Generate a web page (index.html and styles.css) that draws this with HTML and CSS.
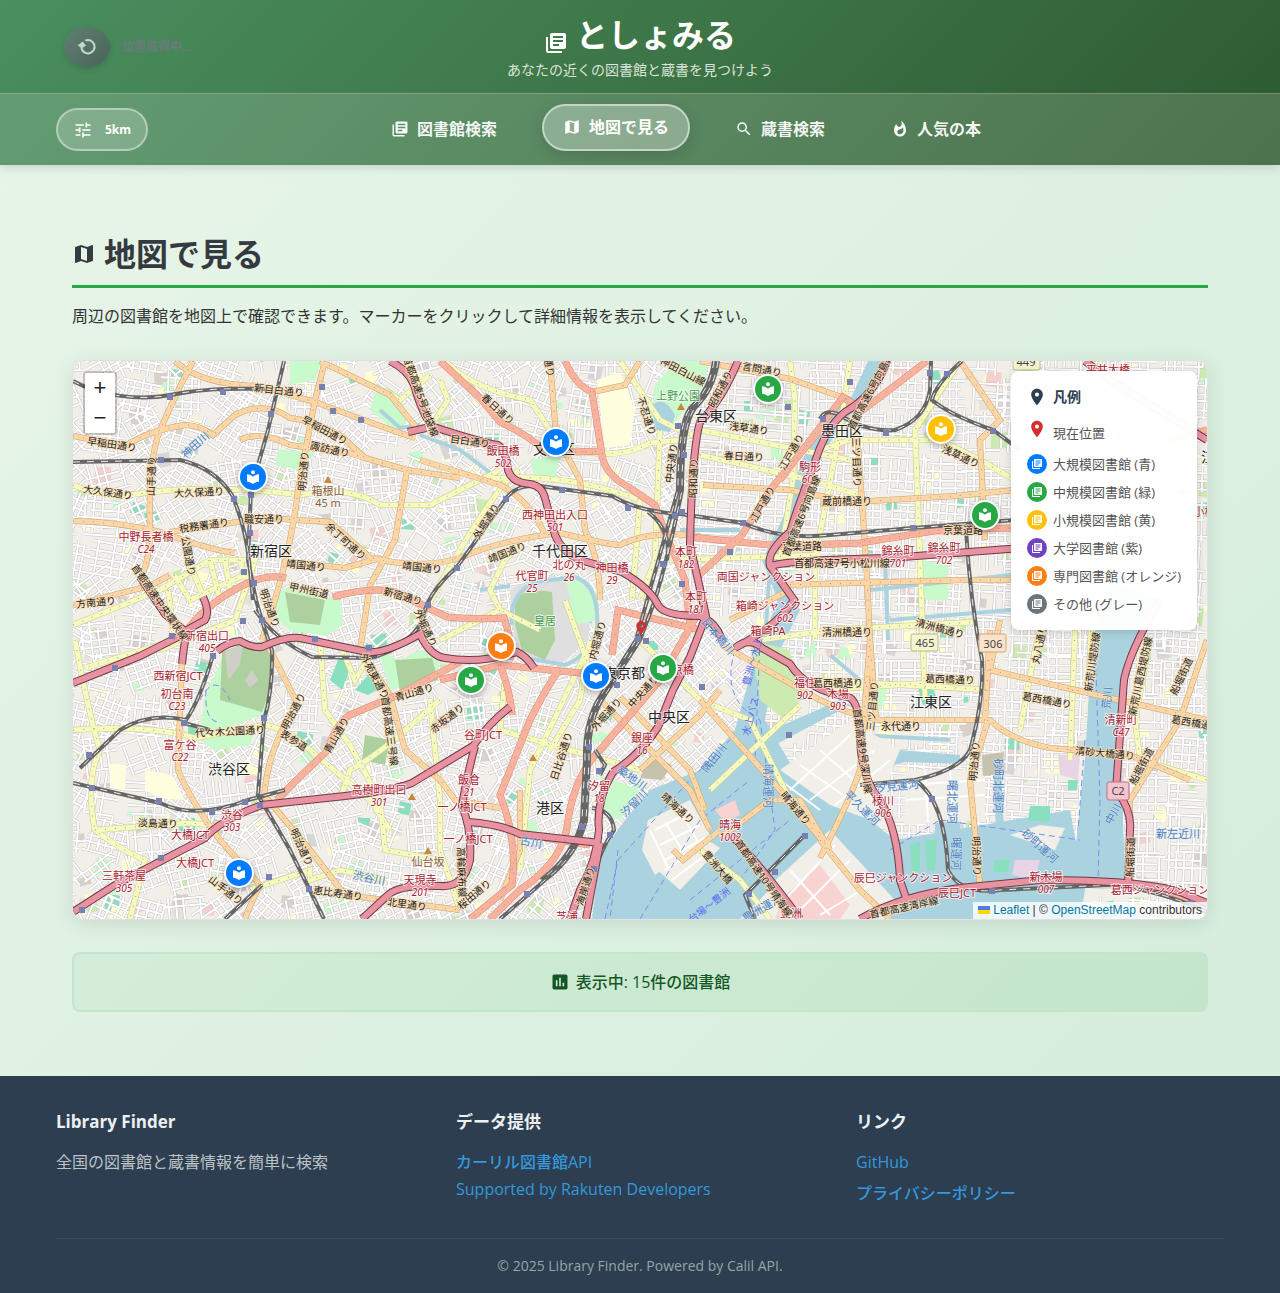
FILE: index.html
```
<!DOCTYPE html>
<html lang="ja">
<head>
<meta charset="utf-8">
<meta name="viewport" content="width=device-width, initial-scale=1">
<title>としょみる</title>
<link rel="stylesheet" href="styles.css">
</head>
<body>
<svg class="sprite" aria-hidden="true">
  <symbol id="i-books" viewBox="0 0 24 24"><path d="M4 6H2v14c0 1.1.9 2 2 2h14v-2H4V6zm16-4H8c-1.1 0-2 .9-2 2v12c0 1.1.9 2 2 2h12c1.1 0 2-.9 2-2V4c0-1.1-.9-2-2-2zm-1 9H9V9h10v2zm-4 4H9v-2h6v2zm4-8H9V5h10v2z"/></symbol>
  <symbol id="i-map" viewBox="0 0 24 24"><path d="M20.5 3l-.16.03L15 5.1 9 3 3.36 4.9c-.21.07-.36.25-.36.48V20.5c0 .28.22.5.5.5l.16-.03L9 18.9l6 2.1 5.64-1.9c.21-.07.36-.25.36-.48V3.5c0-.28-.22-.5-.5-.5zM15 19l-6-2.11V5l6 2.11V19z"/></symbol>
  <symbol id="i-search" viewBox="0 0 24 24"><path d="M15.5 14h-.79l-.28-.27A6.471 6.471 0 0 0 16 9.5 6.5 6.5 0 1 0 9.5 16c1.61 0 3.09-.59 4.23-1.57l.27.28v.79l5 4.99L20.49 19l-4.99-5zm-6 0C7.01 14 5 11.99 5 9.5S7.01 5 9.5 5 14 7.01 14 9.5 11.99 14 9.5 14z"/></symbol>
  <symbol id="i-fire" viewBox="0 0 24 24"><path d="M13.5.67s.74 2.65.74 4.8c0 2.06-1.35 3.73-3.41 3.73-2.07 0-3.63-1.67-3.63-3.73l.03-.36C5.21 7.51 4 10.62 4 14c0 4.42 3.58 8 8 8s8-3.58 8-8C20 8.61 17.41 3.8 13.5.67zM11.71 19c-1.78 0-3.22-1.4-3.22-3.14 0-1.62 1.05-2.76 2.81-3.12 1.77-.36 3.6-1.21 4.62-2.58.39 1.29.59 2.65.59 4.04 0 2.65-2.15 4.8-4.8 4.8z"/></symbol>
  <symbol id="i-tune" viewBox="0 0 24 24"><path d="M3 17v2h6v-2H3zM3 5v2h10V5H3zm10 16v-2h8v-2h-8v-2h-2v6h2zM7 9v2H3v2h4v2h2V9H7zm14 4v-2H11v2h10zm-6-4h2V7h4V5h-4V3h-2v6z"/></symbol>
  <symbol id="i-chart" viewBox="0 0 24 24"><path d="M19 3H5c-1.1 0-2 .9-2 2v14c0 1.1.9 2 2 2h14c1.1 0 2-.9 2-2V5c0-1.1-.9-2-2-2zM9 17H7v-7h2v7zm4 0h-2V7h2v10zm4 0h-2v-4h2v4z"/></symbol>
  <symbol id="i-place" viewBox="0 0 24 24"><path d="M12 2C8.13 2 5 5.13 5 9c0 5.25 7 13 7 13s7-7.75 7-13c0-3.87-3.13-7-7-7zm0 9.5c-1.38 0-2.5-1.12-2.5-2.5s1.12-2.5 2.5-2.5 2.5 1.12 2.5 2.5-1.12 2.5-2.5 2.5z"/></symbol>
  <symbol id="i-reader" viewBox="0 0 24 24"><path d="M12 11.55C9.64 9.35 6.48 8 3 8v11c3.48 0 6.64 1.35 9 3.55 2.36-2.19 5.52-3.55 9-3.55V8c-3.48 0-6.64 1.35-9 3.55zM12 8c1.66 0 3-1.34 3-3s-1.34-3-3-3-3 1.34-3 3 1.34 3 3 3z"/></symbol>
  <symbol id="i-refresh" viewBox="0 0 24 24"><path d="M10 4.3A8 8 0 1 1 5.200 12.500" fill="none" stroke="currentColor" stroke-width="2.400"/><path d="M.8 10.200 6.800 5.500 10.800 10.300 6 13.500z"/></symbol>
</svg>

<header class="header">
  <div class="header-top">
    <div class="locate">
      <button class="locate-btn" type="button" aria-label="現在位置を更新" disabled><svg class="icon"><use href="#i-refresh"/></svg></button>
      <span class="locate-status">位置取得中...</span>
    </div>
    <div class="brand">
      <h1 class="brand-title"><svg class="icon"><use href="#i-books"/></svg>としょみる</h1>
      <p class="brand-sub">あなたの近くの図書館と蔵書を見つけよう</p>
    </div>
  </div>
  <nav class="nav">
    <button class="range-btn" type="button"><svg class="icon"><use href="#i-tune"/></svg>5km</button>
    <div class="tabs">
      <button class="tab" type="button"><svg class="icon"><use href="#i-books"/></svg>図書館検索</button>
      <button class="tab tab-active" type="button"><svg class="icon"><use href="#i-map"/></svg>地図で見る</button>
      <button class="tab" type="button"><svg class="icon"><use href="#i-search"/></svg>蔵書検索</button>
      <button class="tab" type="button"><svg class="icon"><use href="#i-fire"/></svg>人気の本</button>
    </div>
  </nav>
</header>

<main class="main">
  <h2 class="page-title"><svg class="icon"><use href="#i-map"/></svg>地図で見る</h2>
  <p class="lead">周辺の図書館を地図上で確認できます。マーカーをクリックして詳細情報を表示してください。</p>

  <div class="map">
    <svg class="tiles" viewBox="73 361 1134 558" preserveAspectRatio="xMidYMid slice" aria-label="東京都心の地図">
      <defs>
        <g id="motorway">
          <path d="M390 361Q408 370 414 385Q424 420 434 427Q480 442 498 445Q506 450 508 470Q512 483 530 484Q542 486 545 498L555 535Q562 552 580 560L622 572Q650 588 658 605Q664 616 700 616Q716 622 722 640"/>
          <path d="M73 683L140 656L186 633M217 651Q228 642 240 641Q252 648 262 647Q285 636 300 638L367 652Q385 654 420 634Q430 656 445 658Q480 664 517 652Q526 656 534 668"/>
          <path d="M140 577L165 614L187 633M203 597Q210 612 205 620L187 630Q184 645 182 664M408 432L426 428"/>
          <path d="M73 912L115 885L205 838Q220 820 262 805L345 796Q395 790 412 783L473 746Q490 722 510 707M475 746Q466 780 462 806Q472 830 470 860Q464 888 440 886Q400 884 388 895L362 919"/>
          <path d="M468 822Q500 824 520 834L600 843M613 772Q596 800 599 830Q597 860 580 890L570 919M600 843L586 919"/>
          <path d="M738 361Q722 400 700 422Q692 450 690 545L698 580L706 616L690 657L673 690L658 727Q640 755 613 772"/>
          <path d="M887 361Q875 395 845 412Q825 428 814 465Q800 500 790 532Q766 552 770 566L794 600Q780 624 735 648Q750 636 762 648L790 664Q806 690 848 697Q860 700 860 740Q862 780 880 800Q898 830 900 880L906 898"/>
          <path d="M770 566Q790 560 890 558L1060 545M860 919Q900 896 960 888L1040 880Q1140 880 1180 892L1207 903"/>
          <path d="M1085 361L1110 380L1207 440M1160 600Q1130 650 1124 680L1116 790Q1132 810 1130 830L1128 885M732 836Q760 865 800 919"/>
        </g>
        <g id="trunk">
          <path d="M187 630Q210 600 250 582Q270 574 286 578M333 597Q370 586 395 592L447 617Q480 620 504 618Q512 640 510 660M277 800Q300 776 326 752Q338 720 352 714L400 694L460 662"/>
          <path d="M440 361L480 398L500 422Q530 436 546 452L575 452L603 451M565 361Q575 385 592 392L602 455Q605 475 630 488L655 505L664 530L685 580L690 625M560 668Q545 690 530 720L500 795Q518 840 512 885L470 919"/>
          <path d="M700 610L660 680L600 750Q575 775 568 820Q565 860 520 890L490 919M820 430L770 490L742 535L697 577M927 361L863 410L843 397L780 480M690 537L780 546L860 543L940 530L1011 528M440 680L500 665Q510 690 512 715"/>
          <path d="M1170 440L1207 430M612 655L618 610L700 630M500 665L600 675M1130 882L1207 908M545 838L590 845"/>
        </g>
        <g id="primary">
          <path d="M193 361Q180 385 160 430Q148 460 150 530Q150 560 140 580M175 361Q200 385 260 386L315 402Q390 430 415 438M73 436L125 446Q150 430 185 425Q200 425 213 435L235 415Q265 400 290 418Q310 420 340 435L365 458L407 470L460 478M240 440Q260 430 290 445L345 452L365 458M325 361L315 400L298 490Q290 560 262 640"/>
          <path d="M73 521Q120 522 160 532Q210 550 235 553M170 532L265 518L330 522L373 560L345 568L290 562M407 470L395 540L370 585L360 650M373 558Q420 570 460 558Q500 540 560 533Q610 545 620 545Q650 530 700 536M182 660L178 770Q190 800 220 840L260 885Q250 905 245 919M265 640L298 705Q270 740 264 795L310 850L345 895L460 910"/>
          <path d="M73 605L150 586L170 575M320 361L390 395Q410 420 420 432M550 361L556 435L580 480L585 530Q600 560 600 600M360 650L390 695L405 750L440 780L455 800L500 808M420 460L500 485Q530 500 545 535M703 485L790 490L840 500"/>
          <path d="M820 504L955 496L1015 490M857 430L866 560L870 640L876 720M780 585L965 580L1011 580M985 540L980 440L1000 420L960 361M790 590L730 620M700 361L790 379L850 400M640 361L625 385L592 392M620 697L690 770L705 810M673 850L683 860L720 830"/>
          <path d="M600 700L690 790L710 830M640 770L700 715L720 690M720 838L770 800L800 800L830 850M722 645L820 700Q850 715 880 720L990 720Q1010 740 1050 748L1130 755L1190 780M988 720L970 780L980 885M990 670L1075 690L1207 720M990 670L1000 620"/>
          <path d="M1207 640L1180 720L1130 800L1130 880M990 630L985 720M820 858Q850 800 860 770L870 640M820 840L860 890L890 919M700 700L780 790L830 850M520 790L520 850L500 900"/>
        </g>
        <g id="secondary">
          <path d="M73 485Q110 500 150 492Q220 485 300 495Q350 485 380 505L430 505L500 470M168 590L175 640L85 668M73 625L160 590L210 560L255 560L235 620L160 650M210 560L220 600M190 565L205 600M225 560L230 590M240 560L246 580M174 575L190 600L255 570"/>
          <path d="M75 640Q90 720 100 750Q85 780 95 830Q120 850 145 860L130 919M73 730Q150 725 195 738L265 725Q290 730 310 750L370 800L390 830M95 830L190 823L210 825M320 640L325 710L350 745L380 800L385 850L440 860M340 645L355 680L370 655M440 700L400 735Q370 760 350 770L340 800"/>
          <path d="M430 375L400 400L385 390M410 361L425 420M440 380L448 400L435 420M445 361L455 370Q480 390 530 400L550 430L575 450Q620 460 650 443L680 440L700 430M480 480Q560 470 640 500L632 600M520 470Q500 480 445 575L420 620M660 430L655 560L640 600M670 560L820 555"/>
          <path d="M620 361L660 420L680 430M790 361L795 400L793 480L780 560M700 455L810 480L860 495M820 450L850 440L940 440L980 460L1015 480M850 361L840 430L815 560L815 640M960 361L915 430L920 560L925 700M700 430L850 460M760 640L830 630L975 622M820 690L975 680M815 680L990 690M1060 560L1035 650L1020 730M1075 630L1070 760"/>
          <path d="M505 680L500 730L570 750L640 770M540 630L500 610L490 590L505 560L520 545M565 600L585 655L530 770L520 870M590 640L580 700L550 750M640 640L700 700L750 720L780 780L790 800M710 790L800 705M700 850L740 880L770 919M1150 640L1135 720L1140 760L1207 780M1095 361L1090 680M500 610L440 640M250 890L310 870L310 880L340 870L385 880M460 910L440 850L440 800L430 700"/>
        </g>
        <g id="rail">
          <path d="M73 381C100 396 140 401 170 395S225 388 265 389M73 462L180 460Q215 468 232 495Q245 525 249 560L253 600M284 361L268 430L251 490L248 560L256 600Q265 632 272 650Q273 690 264 720L258 795L290 850L324 919"/>
          <path d="M255 610Q275 640 312 657L370 658Q405 650 423 620Q425 595 457 567L505 500Q515 484 540 486L612 496Q640 512 680 514L743 523Q780 540 830 535L913 528L1015 520"/>
          <path d="M718 361Q714 390 695 408Q682 425 682 490Q670 550 655 600L640 640L605 695Q588 720 589 760L586 820Q578 855 545 880L500 919M714 361Q710 390 690 408Q678 425 678 490L636 640L601 695Q584 720 585 760L582 820Q574 855 541 880M648 512Q672 530 667 560"/>
          <path d="M213 655Q200 700 186 720Q150 712 120 730L80 768M184 723L210 730M73 783L160 803Q195 820 248 800L285 790M262 885L225 919M820 419Q825 408 840 415Q865 432 895 430Q925 420 930 390L931 361M962 361Q935 385 932 400Q950 415 993 430L1020 450"/>
          <path d="M860 785L915 780Q960 770 970 750Q984 700 982 660Q970 600 966 530M915 780Q945 800 948 870Q960 895 1000 890L1110 885Q1160 890 1207 912M595 750L605 765L600 775M592 808Q612 810 614 830Q600 850 592 880M805 835L745 895L755 919"/>
        </g>
        <g id="lane"></g>
      </defs>
      <rect class="land" x="73" y="361" width="1134" height="558"/>
      <g id="blocks"></g>
      <use href="#lane" class="lane-case"/><use href="#lane" class="lane-fill"/>
      <g class="park">
        <path d="M278 592L292 586L340 600L343 625L325 636L290 630L272 616z"/><path d="M205 695L222 660L272 640L270 712L210 735L200 730z"/><path d="M378 650L400 660L420 650L440 655L438 680L390 690z"/>
        <path d="M655 385L675 361L708 361L705 385L685 410L668 430L650 420z"/><path d="M530 460L560 455L555 480L535 480z"/><path d="M920 560L948 565L948 600L925 600z"/>
        <path d="M600 775L640 790L620 820L605 815z"/><path d="M278 450L315 452L300 470L275 465zM290 361L322 361L315 380L290 385z"/><path d="M378 385L400 395L408 420L395 430L370 410z"/>
        <path d="M520 825L535 820L540 835L520 835z"/><path d="M905 843L945 830L1020 850L1015 880L925 882L910 870z"/><path d="M868 685L888 685L882 708L874 706z"/><path d="M200 740L255 730L250 745L215 750z"/>
      </g>
      <g class="wood">
        <path d="M222 652L240 645L270 640L272 685L262 712L220 700z"/><path d="M285 592L325 600L320 625L290 622z"/><path d="M395 660L432 658L438 680L400 692z"/><path d="M365 735L390 740L385 765L362 760z"/>
      </g>
      <path class="bare" d="M225 650L243 645L240 665L228 680zM245 680L252 670L258 680L250 688z"/>
      <path class="palace" d="M510 590Q540 570 575 580Q595 600 588 640L560 665L520 655L512 625z"/>
      <path class="wood" d="M515 598Q530 588 552 592L555 640L545 660L522 650L515 625z"/>
      <path class="park" d="M565 575Q605 580 598 620L575 625z"/>
      <path class="school" d="M597 380L620 372L635 410L630 445L605 448z"/>
      <g class="water">
        <path d="M592 919L600 855L625 820L650 790L700 770L735 730L760 640L780 640L765 720L800 780L870 820L895 840L1070 810L1085 890L1080 919H890L800 860L740 919z"/>
        <path d="M868 361L888 361Q870 400 840 425L815 470L795 540L775 570L800 610L765 680L745 700L758 650L778 600L762 560L782 520L802 460L828 412L850 400z"/>
        <path d="M1110 580L1160 600L1125 660L1122 780L1125 880L1072 880L1085 760L1092 640z"/>
        <path d="M652 405Q665 395 675 415L670 432L655 430z"/>
        <path d="M740 725L760 740L830 810L825 822L735 745zM760 735L840 700L850 705L775 745zM790 700L760 640L775 640L805 700zM870 760L900 750L960 755L960 764L905 762L870 772zM950 780L962 780L960 850L935 850L935 780zM1000 760L1004 830L996 830L993 760z"/>
      </g>
      <path class="moat" d="M512 625Q508 595 535 582L575 577Q600 585 597 630Q590 655 565 665L520 657L512 640M480 590L510 586M420 435L460 450L500 480M770 568L765 640M380 410L400 428L420 425M680 530L740 530M890 620L1011 610M870 590L1011 575M885 560L888 640M830 655L860 680M860 735L950 740"/>
      <g class="isle">
        <path d="M648 820L690 800L710 835L655 875L642 850z"/><path d="M655 868L700 835L720 848L680 890z"/><path d="M770 885L830 830L895 900L890 919L760 919z"/><path d="M780 770L850 720L900 750L870 820L830 805z"/><path d="M750 640L790 650L800 700L785 720L760 700z" class="green"/><path d="M905 770L985 770L985 820L905 825z"/><path d="M1010 835L1040 825L1065 828L1055 850z"/>
        <path class="pink" d="M785 895L820 865L850 905L840 919H775zM715 810L735 800L740 815L725 822z"/><path class="mall" d="M1058 755L1080 755L1078 780L1060 775zM1015 860L1040 860L1035 880L1012 875z"/>
        <path class="pitch" d="M1030 806L1050 806L1050 822L1028 820zM1068 780L1078 780L1077 790L1068 790zM910 845L920 842L920 870L912 872zM995 860L1010 860L1008 872L993 872zM925 840L937 840L935 870L927 870z"/>
        <path class="works" d="M650 755L672 765L662 780L640 778zM982 755L1004 752L1000 774L983 776z"/><path class="pitch" d="M340 655L350 668L342 690L330 680zM368 675L380 688L368 695L355 690z"/><path class="school" d="M145 770L172 775L185 800L160 798L145 790zM110 764L126 765L125 790L110 788z"/>
      </g>
      <g class="islelanes"><path d="M655 830L690 812M660 845L700 825M665 860L705 838M650 830L668 868M665 822L685 855M680 812L698 842M780 780L820 810M800 765L850 800M820 750L865 790M790 790L850 735M810 800L875 750M835 805L890 760M780 905L835 845M800 910L850 860M820 915L870 885M790 870L830 915M905 785L985 780M905 800L985 795M925 770L928 822M950 770L953 822M665 870L705 845M672 880L712 850"/></g>
      <path class="ferry" d="M735 650Q720 700 760 720L775 830L740 880M760 640L755 760M605 919L618 860L690 780L730 740M640 919L700 820L750 780M618 850L610 919M1095 640L1100 800L1098 880M940 820L1080 840M890 850L940 820M690 900L790 820M1085 740L1078 830M200 700Q215 670 230 700M206 690Q204 720 218 722"/>
      <use href="#secondary" class="secondary-case"/><use href="#secondary" class="secondary-fill"/>
      <use href="#primary" class="primary-case"/><use href="#primary" class="primary-fill"/>
      <use href="#trunk" class="trunk-case"/><use href="#trunk" class="trunk-fill"/>
      <use href="#rail" class="rail-case"/><use href="#rail" class="rail-fill"/>
      <use href="#motorway" class="motorway-case"/><use href="#motorway" class="motorway-fill"/>
      <use href="#trunk" class="stops"/><use href="#primary" class="stops"/><use href="#secondary" class="stops"/>
      <g id="stations" class="stations"></g>
      <g class="shields"><rect x="1013" y="353" width="27" height="17" rx="2"/><rect x="911" y="634" width="27" height="17" rx="2"/><rect class="shield-306" x="979" y="634" width="27" height="18" rx="2"/><rect class="shield-c2" x="1107" y="782" width="22" height="18" rx="2"/></g>
      <g id="labels"></g>
    </svg>

    <div id="markers"></div>
    <button class="pin" type="button" aria-label="現在位置"><svg class="icon"><use href="#i-place"/></svg></button>

    <div class="zoom">
      <button class="zoom-btn" type="button" aria-label="拡大">+</button>
      <button class="zoom-btn" type="button" aria-label="縮小">−</button>
    </div>

    <aside class="legend">
      <h3 class="legend-title"><svg class="icon"><use href="#i-place"/></svg>凡例</h3>
      <ul class="legend-list">
        <li class="legend-item here"><svg class="icon"><use href="#i-place"/></svg>現在位置</li>
        <li class="legend-item"><span class="dot blue"><svg class="icon"><use href="#i-books"/></svg></span>大規模図書館 (青)</li>
        <li class="legend-item"><span class="dot green"><svg class="icon"><use href="#i-books"/></svg></span>中規模図書館 (緑)</li>
        <li class="legend-item"><span class="dot yellow"><svg class="icon"><use href="#i-books"/></svg></span>小規模図書館 (黄)</li>
        <li class="legend-item"><span class="dot purple"><svg class="icon"><use href="#i-books"/></svg></span>大学図書館 (紫)</li>
        <li class="legend-item"><span class="dot orange"><svg class="icon"><use href="#i-books"/></svg></span>専門図書館 (オレンジ)</li>
        <li class="legend-item"><span class="dot gray"><svg class="icon"><use href="#i-books"/></svg></span>その他 (グレー)</li>
      </ul>
    </aside>

    <div class="credit"><a href="#leaflet"><svg class="flag" viewBox="0 0 12 8"><path fill="#4c7be1" d="M0 0h12v4H0z"/><path fill="#ffd500" d="M0 4h12v4H0z"/></svg> Leaflet</a> | © <a href="#osm">OpenStreetMap</a> contributors</div>
  </div>

  <div class="stats"><svg class="icon"><use href="#i-chart"/></svg>表示中: 15件の図書館</div>
</main>

<footer class="footer">
  <div class="footer-cols">
    <section>
      <h4 class="footer-title">Library Finder</h4>
      <p class="footer-text">全国の図書館と蔵書情報を簡単に検索</p>
    </section>
    <section>
      <h4 class="footer-title">データ提供</h4>
      <p class="footer-text"><a href="#calil">カーリル図書館API</a></p>
      <p class="footer-text"><a href="#rakuten">Supported by Rakuten Developers</a></p>
    </section>
    <section>
      <h4 class="footer-title">リンク</h4>
      <ul class="footer-links">
        <li><a href="#github">GitHub</a></li>
        <li><a href="#privacy">プライバシーポリシー</a></li>
      </ul>
    </section>
  </div>
  <p class="copyright">© 2025 Library Finder. Powered by Calil API.</p>
</footer>
<script src="map.js"></script>
</body>
</html>
```
FILE: styles.css
```
* { box-sizing: border-box; margin: 0; padding: 0; }
body {
  font-family: "Open Sans", "Noto Sans CJK JP", sans-serif;
  font-size: 16px;
  line-height: 24px;
  color: #333;
  background: linear-gradient(135deg, #e8f5e8 0%, #d4edda 100%);
}
button { font: inherit; color: inherit; border: 0; background: none; cursor: pointer; }
ul { list-style: none; }
.sprite { display: none; }
.icon { width: 16px; height: 16px; fill: currentColor; flex: none; display: block; }

/* header */
.header {
  position: relative;
  color: #fff;
  background: linear-gradient(135deg, #4a8f5f 0%, #3d7546 50%, #2d5a2f 100%);
  box-shadow: 0 2px 10px rgba(0, 0, 0, .15);
}
.header-top {
  display: grid;
  grid-template-columns: 1fr auto 1fr;
  align-items: center;
  padding: 12px 64px;
}
.locate { display: flex; align-items: center; gap: 12px; }
.locate-btn {
  display: flex; align-items: center; justify-content: center;
  width: 46px; height: 40px; border-radius: 50%;
  color: #c3d8cb;
  background: linear-gradient(135deg, #5f8170, #4a625b);
  box-shadow: 0 2px 6px rgba(0, 0, 0, .15);
}
.locate-btn .icon { width: 20px; height: 20px; }
.locate-status { font-size: 12px; font-weight: 600; color: #6b7a7c; }
.brand { text-align: center; }
.brand-title {
  display: flex; align-items: center; justify-content: center; gap: 8px;
  font-size: 32px; line-height: 46px; font-weight: 700;
}
.brand-title .icon { width: 24px; height: 24px; margin-top: 16px; }
.brand-sub { font-size: 14px; line-height: 23px; color: rgba(255, 255, 255, .82); }
.nav {
  display: flex; align-items: center;
  padding: 12px 56px;
  background: rgba(255, 255, 255, .15);
  border-top: 1px solid rgba(255, 255, 255, .2);
}
.range-btn {
  display: flex; align-items: center; gap: 12px;
  height: 43px; padding: 0 15px; border-radius: 22px;
  border: 2px solid rgba(255, 255, 255, .4);
  background: rgba(255, 255, 255, .2);
  font-size: 12px; font-weight: 700;
}
.range-btn .icon { width: 20px; height: 20px; }
.tabs { flex: 1; display: flex; justify-content: center; gap: 24px; }
.tab {
  display: flex; align-items: center; gap: 8px;
  height: 47px; padding: 0 19px 2px; border-radius: 25px;
  border: 2px solid transparent;
  font-weight: 600; color: rgba(255, 255, 255, .95);
}
.tab .icon { width: 18px; height: 18px; }
.tab-active {
  transform: translateY(-2px);
  background: rgba(255, 255, 255, .3);
  border-color: rgba(255, 255, 255, .5);
  box-shadow: 0 4px 15px rgba(0, 0, 0, .15);
  font-weight: 700; color: #fff;
}

/* main */
.main { max-width: 1200px; margin: 0 auto; padding: 66px 32px 64px; }
.page-title {
  display: flex; align-items: center; gap: 8px;
  padding-bottom: 8px; border-bottom: 3px solid #28a745;
  font-size: 32px; line-height: 46px; font-weight: 600; color: #343a40;
}
.page-title .icon { width: 24px; height: 24px; }
.lead { margin: 16px 0 32px; }
.map {
  position: relative; height: 560px; overflow: hidden;
  border: 1px solid #dee2e6; border-radius: 12px;
  box-shadow: 0 4px 20px rgba(0, 0, 0, .1);
}
.tiles { display: block; width: 100%; height: 100%; }
.stats {
  display: flex; align-items: center; justify-content: center; gap: 6px;
  height: 60px; margin-top: 32px; border-radius: 8px;
  border: 2px solid #c3e6cb;
  background: linear-gradient(135deg, #d4edda, #c3e6cb);
  color: #155724; font-weight: 500;
}
.stats .icon { width: 20px; height: 20px; }

/* map drawing */
.tiles path, .tiles use { fill: none; }
.tiles .land { fill: #f2efe9; }
.tiles .park path, .tiles path.park { fill: #c8facc; }
.tiles .wood path, .tiles path.wood { fill: #add19e; }
.tiles .bare { fill: #cfcfc8; }
.tiles .palace { fill: #e0dfdf; }
.tiles path.school { fill: #ffffe0; }
.tiles .water path { fill: #aad3df; }
.tiles .isle path { fill: #f2efe9; }
.tiles .isle .green { fill: #cdebb0; }
.tiles .isle .pink { fill: #f9d2d2; }
.tiles .isle .mall { fill: #e8d4e4; }
.tiles .isle .pitch { fill: #88e0be; }
.tiles .isle .works { fill: #c5c3ae; }
.tiles .isle .school { fill: #ffffe0; }
.islelanes { stroke: #fff; stroke-width: 2; }
.moat { stroke: #aad3df; stroke-width: 4; }
.ferry { stroke: #7a8df0; stroke-width: 1; stroke-dasharray: 6 4; }
.lane-case { stroke: #c4bfc4; stroke-width: 3; }
.lane-fill { stroke: #fff; stroke-width: 2; }
.secondary-case { stroke: #c9cc8a; stroke-width: 6; }
.secondary-fill { stroke: #f7fabf; stroke-width: 5; }
.primary-case { stroke: #c9a36c; stroke-width: 6; }
.primary-fill { stroke: #fcd6a4; stroke-width: 5; }
.trunk-case { stroke: #d98871; stroke-width: 7; }
.trunk-fill { stroke: #f9b29c; stroke-width: 6; }
.rail-case { stroke: #666; stroke-width: 4; }
.rail-fill { stroke: #eee; stroke-width: 1; stroke-dasharray: 7 7; }
.motorway-case { stroke: #6d3a45; stroke-width: 8; }
.motorway-fill { stroke: #e892a2; stroke-width: 6; }
.stops { stroke: #9a8fb5; stroke-width: 1; stroke-dasharray: 1 9; }
.stations { fill: #7981b0; }
.shields rect { fill: #f4f5d0; stroke: #b9bb80; }
.shields .shield-306 { fill: #fae3cc; stroke: #cfa878; }
.shields .shield-c2 { fill: #f3c6cf; stroke: #c96d80; }
.tiles text {
  font-family: "Noto Sans", "Noto Sans CJK JP", sans-serif;
  text-anchor: middle; paint-order: stroke; stroke-linejoin: round;
}
.t-ward { font-size: 14px; fill: #222; stroke: rgba(255, 255, 255, .6); stroke-width: 2px; }
.t-road { font-size: 10px; fill: #222; stroke: rgba(252, 225, 185, .8); stroke-width: 2px; }
.t-exit { font-size: 11px; fill: #a8202e; stroke: rgba(255, 255, 255, .75); stroke-width: 2px; }
.t-num { font-size: 10px; font-style: italic; fill: #a8202e; stroke: rgba(255, 255, 255, .75); stroke-width: 2px; }
.t-water { font-size: 11px; fill: #4f80c0; stroke: rgba(220, 238, 245, .6); stroke-width: 1px; }
.t-ferry { font-size: 10px; fill: #5c6cf0; }
.t-hill { font-size: 11px; fill: #8a5a3c; stroke: rgba(255, 255, 255, .7); stroke-width: 2px; }
.t-park { font-size: 11px; fill: #4a9a50; stroke: rgba(255, 255, 255, .7); stroke-width: 2px; }
.t-shield { font-size: 11px; fill: #444; }

/* map overlays */
.marker {
  position: absolute; width: 30px; height: 30px; margin: -15px 0 0 -15px;
  display: flex; align-items: center; justify-content: center;
  border: 2px solid #fff; border-radius: 50%; color: #fff;
  box-shadow: 0 2px 6px rgba(0, 0, 0, .3);
}
.pin { position: absolute; left: calc(50% + 1px); top: 267px; margin: -8px 0 0 -8px; color: #d32f2f; }
.blue { background: #007bff; }
.green { background: #28a745; }
.yellow { background: #ffc107; }
.purple { background: #6f42c1; }
.orange { background: #fd7e14; }
.gray { background: #6c757d; }
.zoom {
  position: absolute; left: 10px; top: 10px;
  border: 2px solid rgba(0, 0, 0, .2); border-radius: 4px; background-clip: padding-box;
}
.zoom-btn {
  display: block; width: 30px; height: 30px; background: #fff;
  font: 22px/30px "Liberation Sans", Arial, sans-serif; color: #222;
}
.zoom-btn:first-child { border-radius: 2px 2px 0 0; }
.zoom-btn:last-child { border-radius: 0 0 2px 2px; }
.legend {
  position: absolute; right: 10px; top: 10px;
  padding: 16px; border-radius: 8px;
  background: rgba(255, 255, 255, .97);
  box-shadow: 0 2px 10px rgba(0, 0, 0, .15);
}
.legend-title {
  display: flex; align-items: center; gap: 6px;
  margin-bottom: 12px; font-size: 14px; line-height: 20px; font-weight: 600; color: #2c3e50;
}
.legend-title .icon { width: 20px; height: 20px; }
.legend-list { display: flex; flex-direction: column; gap: 8px; }
.legend-item {
  display: flex; align-items: center; gap: 6px;
  font-size: 13px; line-height: 20px; color: #555;
}
.here { height: 27px; }
.here .icon { width: 20px; height: 24px; color: #d32f2f; margin-top: -8px; }
.dot { display: flex; align-items: center; justify-content: center; width: 20px; height: 20px; border-radius: 50%; color: #fff; }
.dot .icon { width: 12px; height: 12px; }
.credit {
  position: absolute; right: 0; bottom: 0; padding: 0 5px;
  background: rgba(255, 255, 255, .8);
  font: 12px/17px "Liberation Sans", Arial, sans-serif; color: #333;
}
.credit a { color: #0078a8; text-decoration: none; }
.flag { width: 12px; height: 8px; }

/* footer */
.footer { padding: 32px 56px 0; background: #2c3e50; color: #bdc3c7; }
.footer-cols, .copyright { max-width: 1168px; margin: 0 auto; }
.footer-cols { display: grid; grid-template-columns: repeat(3, 1fr); gap: 32px; }
.footer-title { margin-bottom: 14px; font-size: 17px; line-height: 27px; font-weight: 700; color: #ecf0f1; }
.footer-text { line-height: 27px; }
.footer a { color: #3498db; text-decoration: none; font-weight: 500; }
.footer-links { display: flex; flex-direction: column; gap: 4px; line-height: 27px; }
.copyright {
  margin-top: 31px; padding: 16px 0;
  border-top: 1px solid #34495e;
  font-size: 14px; line-height: 22px; text-align: center; color: #95a5a6;
}
```
FILE: map.js
```
const NS = 'http://www.w3.org/2000/svg';
const byId = (id) => document.getElementById(id);
function add(parent, name, attrs, text) {
  const el = document.createElementNS(NS, name);
  for (const key in attrs) el.setAttribute(key, attrs[key]);
  if (text) el.textContent = text;
  parent.appendChild(el);
  return el;
}

let seed = 11;
function rnd() { seed = (seed * 16807) % 2147483647; return seed / 2147483647; }

// Local streets: each neighbourhood is a small grid turned to its own angle.
function streetAngle(x, y) {
  if (x > 760) return 0.04 + (rnd() - 0.5) * 0.08;
  if (x > 660 && y < 600) return 0.07;
  if (x > 600 && y > 600) return -0.75;
  return rnd() * 1.5;
}
let lanes = '';
for (let y = 350; y < 940; y += 40) {
  for (let x = 60; x < 1230; x += 40) {
    const a = streetAngle(x, y);
    const cx = x + rnd() * 10, cy = y + rnd() * 10;
    const ux = Math.cos(a), uy = Math.sin(a);
    for (let i = -2; i <= 2; i++) {
      for (const turn of [0, 1]) {
        if (rnd() < 0.12) continue;
        const [dx, dy] = turn ? [-uy, ux] : [ux, uy];
        const off = i * 8 + rnd() * 2;
        const px = cx - dy * off, py = cy + dx * off;
        const before = 12 + rnd() * 12, after = 12 + rnd() * 12;
        lanes += `M${(px - dx * before).toFixed(1)} ${(py - dy * before).toFixed(1)}L${(px + dx * after).toFixed(1)} ${(py + dy * after).toFixed(1)}`;
      }
    }
  }
}
add(byId('lane'), 'path', { d: lanes });

// Land use patches under the streets.
const uses = ['#ffffd0', '#ffffd0', '#c8facc', '#88e0be', '#d8d6d6', '#f5d0cc', '#cdebb0', '#d9d0c9', '#e6e3dc'];
for (let i = 0; i < 760; i++) {
  const x = 73 + rnd() * 1134, y = 361 + rnd() * 558, s = 5 + rnd() * 11;
  add(byId('blocks'), 'rect', { x: x.toFixed(0), y: y.toFixed(0), width: s.toFixed(0), height: (s * (0.6 + rnd() * 0.6)).toFixed(0), fill: uses[Math.floor(rnd() * uses.length)], transform: `rotate(${Math.floor(rnd() * 40 - 20)} ${x.toFixed(0)} ${y.toFixed(0)})` });
}

const stations = [[170,397],[223,392],[161,460],[271,414],[322,387],[333,411],[361,420],[234,499],[251,495],[250,533],[244,572],[254,583],[243,621],[262,620],[172,636],[213,656],[115,668],[184,723],[89,755],[92,788],[159,801],[212,812],[245,802],[260,805],[264,718],[315,639],[369,648],[428,605],[457,568],[506,499],[562,490],[628,508],[675,516],[682,512],[684,455],[678,426],[663,564],[682,584],[730,552],[743,523],[788,407],[850,382],[823,419],[886,433],[930,373],[947,374],[993,431],[913,528],[791,534],[617,685],[589,747],[599,771],[582,827],[610,835],[594,869],[527,894],[702,687],[789,735],[805,836],[775,872],[749,894],[932,799],[992,891],[161,858],[82,910],[269,877],[309,889],[638,639],[646,641],[1191,903]];
stations.forEach(([x, y]) => add(byId('stations'), 'rect', { x: x - 3, y: y - 3, width: 6, height: 6 }));

const labels = {
  't-ward': [['新宿区',271,556],['文京区',554,454],['台東区',716,421],['墨田区',842,436],['千代田区',560,556],['東京都',624,678],['中央区',669,722],['港区',550,813],['渋谷区',229,774],['江東区',931,707],['江戸川区',1229,462]],
  't-exit': [['中野長者橋',146,541],['新宿出口',207,640],['西新宿JCT',178,680],['初台南',177,698],['富ケ谷',180,749],['渋谷',232,819],['大橋JCT',190,839],['大橋JCT',195,867],['三軒茶屋',124,880],['高樹町出口',379,794],['天現寺',420,884],['飯田橋',503,455],['西神田出入口',555,519],['北の丸',569,569],['代官町',532,580],['神田橋',612,572],['本町',686,556],['本町',696,601],['駒形',810,471],['両国ジャンクション',766,581],['箱崎ジャンクション',785,610],['箱崎PA',768,635],['錦糸町',898,555],['錦糸町',944,552],['谷町JCT',483,739],['飯倉',469,784],['一ノ橋JCT',462,811],['一ノ橋JCT',468,843],['銀座',642,742],['汐留',599,790],['京橋',683,674],['福住',805,687],['木場',838,698],['晴海',730,829],['枝川',883,805],['辰巳ジャンクション',903,882],['辰巳JCT',957,897],['新木場',1046,881],['葛西ジャンクション',1160,894],['清新町',1121,724],['豊洲',791,917],['芝浦',567,921],['平井大橋',1108,374],['小松川',1210,516]],
  't-num': [['C24',146,553],['405',207,652],['C23',177,710],['C22',180,761],['303',232,831],['305',124,892],['301',379,806],['201',420,896],['502',503,467],['501',555,531],['26',569,581],['25',532,592],['29',612,584],['182',686,568],['181',696,613],['605',810,483],['602',785,622],['701',898,567],['702',944,564],['21',469,796],['16',642,754],['18',599,802],['902',805,699],['903',838,710],['1002',730,841],['906',883,817],['007',1046,893],['C47',1121,736]],
  't-water': [['神田川',195,449,-42],['隅田川',714,762,-52],['築地川',632,782,35],['汐留川',634,807,-45],['渋谷川',369,882,12],['古川',531,846,12],['荒川',1107,702,-85],['中川',1113,818,-60],['汐見運河',897,790,-5],['平久運河',862,812,45],['曙北運河',952,806,90],['曙運河',956,858,90],['砂町北運河',998,790,90],['砂町運河',1040,850,42],['新左近川',1178,838],['晴海運河',768,790,90],['豊洲運河',762,912,-30],['日本橋川',718,640,50]],
  't-ferry': [['水上バス',750,720,-75],['豊洲～水上',752,665,-75],['お台場～豊洲',705,912,-38]],
  't-hill': [['箱根山',328,495],['45 m',328,507],['仙台坂',428,866]],
  't-park': [['上野公園',678,400],['皇居',545,625]],
  't-shield': [['449',1026,366],['465',925,647],['306',993,648],['C2',1118,795]],
  't-road': [['新目白通り',279,394,6],['早稲田通り',112,448,8],['早稲田通り',325,434,28],['諏訪通り',330,453,12],['大久保通り',108,496,8],['大久保通り',199,496,-3],['税務署通り',204,529,-8],['職安通り',264,523],['山手通り',151,480,-88],['明治通り',303,475,-85],['明治通り',270,612,70],['余丁町通り',346,545,42],['靖国通り',306,569,6],['靖国通り',422,571,6],['甲州街道',309,594,12],['新宿通り',403,600,16],['方南通り',96,606,-6],['公園通り',189,560,80],['首都高速中央環状線',160,606,55],['首都高速5号池袋線',421,400,70],['春日通り',498,413,42],['目白通り',470,445,8],['外堀通り',486,525,-58],['靖国通り',507,556,-22],['本郷通り',548,361,80],['不忍通り',647,420,72],['中央通り',671,467,-82],['昭和通り',693,482,-88],['昭和通り',720,393,-62],['浅草通り',749,432,8],['春日通り',744,460,3],['神田白山線',683,375,28],['言問通り',762,373,10],['江戸通り',762,508,-60],['江戸通り',791,456,-60],['蔵前橋通り',847,505],['三ツ目通り',857,466,88],['浅草通り',961,460,25],['京葉道路',802,550],['京葉道路',963,534],['首都高速7号小松川線',842,567],['首都高速6号向島線',801,520,-68],['首都高速6号向島線',870,395,-62],['清洲橋通り',847,636],['清洲橋通り',940,632,15],['葛西橋通り',838,687],['葛西橋通り',950,683,2],['葛西橋通り',1047,704,10],['葛西橋通り',1196,727,10],['永代通り',901,730],['三ツ目通り',872,710,-85],['清砂大橋通り',1105,757,5],['首都高速9号深川線',863,755,82],['明治通り',974,765,-85],['明治通り',977,860,88],['丸八通り',1039,648,-78],['新荒川堤防線',1092,666,-82],['新荒川葛西堤防線',1140,680,-78],['船堀街道',1181,680,-65],['船堀街道',1141,770,-62],['船堀街道',1130,861,-88],['首都高速湾岸線',904,911,-12],['代々木公園通り',230,735,-3],['表参道',294,744,32],['明治通り',293,715,-62],['青山通り',336,739,-60],['青山通り',414,696,-16],['外苑東通り',375,680,62],['首都高速三号線',390,735,82],['赤坂通り',447,722,-38],['淡島通り',158,827,2],['明治通り',302,851,65],['恵比寿通り',338,897,8],['北里通り',407,908,8],['山手通り',226,894,38],['桜田通り',474,898,-40],['日比谷通り',561,760,-72],['中央通り',643,695,-48],['外堀通り',606,718,-48],['外堀通り',426,632,65],['内堀通り',597,644,-75],['晴海通り',678,812,42],['晴海通り',796,812,50],['豊洲大橋',718,871,50],['首都高速10号晴海線',764,882,55],['海岸通り',585,890,-72],['高輪麻布線',462,876,88]]
};
for (const cls in labels) {
  labels[cls].forEach(([text, x, y, turn]) => {
    add(byId('labels'), 'text', { class: cls, x, y, ...(turn ? { transform: `rotate(${turn} ${x} ${y - 4})` } : {}) }, text);
  });
}
[[328,479],[681,406],[533,757],[412,796],[428,850]].forEach(([x, y]) => {
  add(byId('labels'), 'path', { d: `M${x - 4} ${y + 4}h8l-4-7z`, style: 'fill:#c8873f' });
});

// Library markers: offset from the map centre, and size class.
const libraries = [['中央図書館',-387,-163,'blue'],['文京図書館',-84,-198,'blue'],['台東図書館',128,-251,'green'],['墨田図書館',301,-211,'yellow'],['江東図書館',345,-125,'green'],['専門図書館',-139,6,'orange'],['赤坂図書館',-169,40,'green'],['日比谷図書館',-44,36,'blue'],['京橋図書館',23,28,'green'],['目黒図書館',-401,233,'blue']];
byId('markers').innerHTML = libraries.map(([name, x, y, kind]) =>
  `<button type="button" class="marker ${kind}" aria-label="${name}" style="left:calc(50% + ${x}px);top:calc(50% + ${y}px)"><svg class="icon"><use href="#i-reader"/></svg></button>`).join('');
```
